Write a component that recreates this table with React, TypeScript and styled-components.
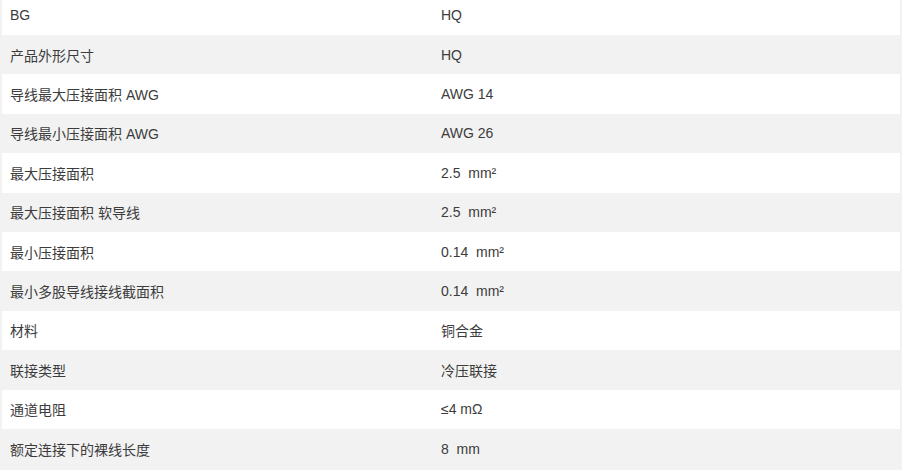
import React from 'react'
import styled, { createGlobalStyle } from 'styled-components'

const GlobalStyle = createGlobalStyle`
  html, body {
    margin: 0;
    padding: 0;
    background: #f2f2f2;
    overflow: hidden;
  }
`

const Page = styled.div`
  padding: 0 2px;
  margin-top: -4.4px;
  font-family: 'Liberation Sans', Arial, 'Noto Sans CJK SC', sans-serif;
  font-size: 14px;
  color: #3c3c3c;
`

const Row = styled.div<{ $striped?: boolean }>`
  display: grid;
  grid-template-columns: 431px 1fr;
  align-items: center;
  height: 39.4px;
  background: ${(p) => (p.$striped ? '#f2f2f2' : '#ffffff')};
`

const Cell = styled.div`
  padding-left: 8px;
  white-space: pre;
`

const specs: [string, string][] = [
  ['BG', 'HQ'],
  ['产品外形尺寸', 'HQ'],
  ['导线最大压接面积 AWG', 'AWG 14'],
  ['导线最小压接面积 AWG', 'AWG 26'],
  ['最大压接面积', '2.5  mm²'],
  ['最大压接面积 软导线', '2.5  mm²'],
  ['最小压接面积', '0.14  mm²'],
  ['最小多股导线接线截面积', '0.14  mm²'],
  ['材料', '铜合金'],
  ['联接类型', '冷压联接'],
  ['通道电阻', '≤4 mΩ'],
  ['额定连接下的裸线长度', '8  mm'],
]

const App = () => (
  <>
    <GlobalStyle />
    <Page>
      {specs.map(([label, value], i) => (
        <Row key={label} $striped={i % 2 === 1}>
          <Cell>{label}</Cell>
          <Cell>{value}</Cell>
        </Row>
      ))}
    </Page>
  </>
)

export default App
